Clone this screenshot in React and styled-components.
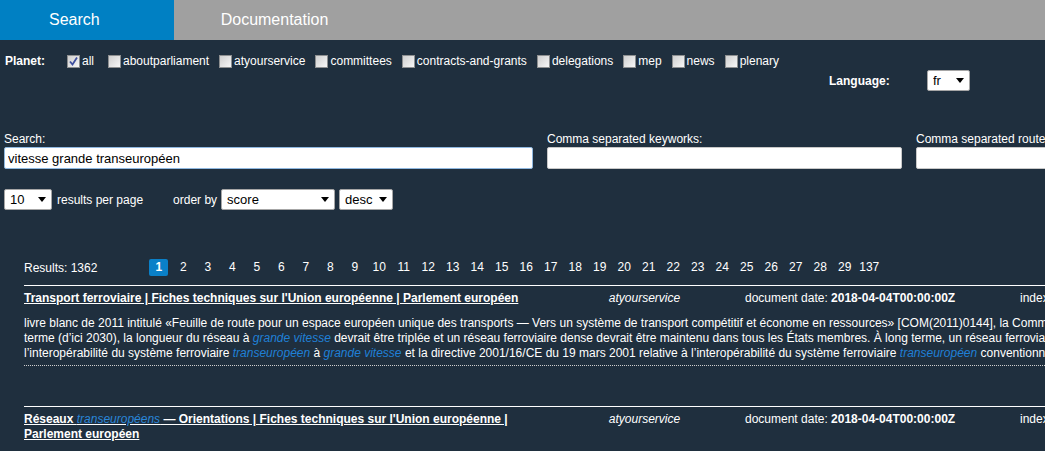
import React from 'react';
import styled, { createGlobalStyle } from 'styled-components';

const GlobalStyle = createGlobalStyle`
  html, body {
    margin: 0;
    padding: 0;
    background: #1f2f3e;
    overflow: hidden;
  }
  body {
    font-family: "Liberation Sans", Arial, sans-serif;
    font-size: 12px;
    color: #fff;
  }
`

const planets = ['all', 'aboutparliament', 'atyourservice', 'committees', 'contracts-and-grants', 'delegations', 'mep', 'news', 'plenary']
const pages = [...Array.from({ length: 29 }, (_, i) => i + 1), 137]

function Select({ width, value, options }) {
  return (
    <SelectWrap $w={width}>
      <NativeSelect defaultValue={value}>
        {options.map(o => <option key={o}>{o}</option>)}
      </NativeSelect>
      <Caret />
    </SelectWrap>
  )
}

function Check({ checked, label }) {
  return (
    <CheckItem $extra={checked}>
      <Box>
        {checked && (
          <svg width="11" height="11" viewBox="0 0 11 11">
            <path d="M2 5.5 L4.5 8.5 L9 1.5" fill="none" stroke="#3e4f9e" strokeWidth="1.8" />
          </svg>
        )}
      </Box>
      {label}
    </CheckItem>
  )
}

function App() {
  return (
    <>
      <GlobalStyle />
      <TabBar>
        <Tab $active>Search</Tab>
        <Tab>Documentation</Tab>
      </TabBar>
      <Main>
        <PlanetRow>
          <Strong>Planet:</Strong>
          <CheckList>
            {planets.map(p => <Check key={p} label={p} checked={p === 'all'} />)}
          </CheckList>
        </PlanetRow>

        <LanguageRow>
          <LangLabel>Language:</LangLabel>
          <Select width={43} value="fr" options={['fr', 'en', 'de']} />
        </LanguageRow>

        <FieldsRow>
          <Field>
            <FieldLabel>Search:</FieldLabel>
            <TextInput $w={529} $focus defaultValue="vitesse grande transeuropéen" />
          </Field>
          <Field>
            <FieldLabel>Comma separated keyworks:</FieldLabel>
            <TextInput $w={355} />
          </Field>
          <Field>
            <FieldLabel>Comma separated routes:</FieldLabel>
            <TextInput $w={355} />
          </Field>
        </FieldsRow>

        <OptionsRow>
          <Select width={48} value="10" options={['10', '20', '50']} />
          <Text $ml={5}>results per page</Text>
          <Text $ml={30}>order by</Text>
          <Spacer />
          <Select width={114} value="score" options={['score', 'date']} />
          <Spacer />
          <Select width={54} value="desc" options={['desc', 'asc']} />
        </OptionsRow>

        <Results>
          <ResultsHeader>
            <Count>Results: 1362</Count>
            <Pager>
              {pages.map(n => (
                <PageCell key={n}>
                  <PageLink $active={n === 1}>{n}</PageLink>
                </PageCell>
              ))}
            </Pager>
          </ResultsHeader>

          <Item>
            <ItemHead>
              <Title>Transport ferroviaire | Fiches techniques sur l'Union européenne | Parlement européen</Title>
              <PlanetName>atyourservice</PlanetName>
              <Meta>document date: <b>2018-04-04T00:00:00Z</b></Meta>
              <Meta>index: <b>fr</b></Meta>
            </ItemHead>
            <Snippet>
              <Line>livre blanc de 2011 intitulé «Feuille de route pour un espace européen unique des transports — Vers un système de transport compétitif et économe en ressources» [COM(2011)0144], la Commission a fixé des objectifs : à moyen</Line>
              <Line>terme (d’ici 2030), la longueur du réseau à <Hl>grande vitesse</Hl> devrait être triplée et un réseau ferroviaire dense devrait être maintenu dans tous les États membres. À long terme, un réseau ferroviaire</Line>
              <Line>l’interopérabilité du système ferroviaire <Hl>transeuropéen</Hl> à <Hl>grande vitesse</Hl> et la directive 2001/16/CE du 19 mars 2001 relative à l’interopérabilité du système ferroviaire <Hl>transeuropéen</Hl> conventionnel</Line>
            </Snippet>
          </Item>

          <Item $gap={40}>
            <ItemHead>
              <Title>Réseaux <TitleHl>transeuropéens</TitleHl> — Orientations | Fiches techniques sur l'Union européenne | Parlement européen</Title>
              <PlanetName>atyourservice</PlanetName>
              <Meta>document date: <b>2018-04-04T00:00:00Z</b></Meta>
              <Meta>index: <b>fr</b></Meta>
            </ItemHead>
          </Item>
        </Results>
      </Main>
    </>
  )
}

export default App;

const TabBar = styled.div`
display: flex;
height: 40px;
background: #a0a0a0;
`
const Tab = styled.div`
box-sizing: border-box;
width: ${p => p.$active ? 174 : 201}px;
padding-left: ${p => p.$active ? 49 : 0}px;
line-height: 40px;
text-align: ${p => p.$active ? 'left' : 'center'};
font-size: 16px;
color: #fff;
background: ${p => p.$active ? '#0080c3' : '#a0a0a0'};
`
const Main = styled.div`
overflow: hidden;
`
const PlanetRow = styled.div`
display: flex;
align-items: center;
height: 16px;
padding: 13px 0 0 5px;
`
const Strong = styled.span`
font-weight: bold;
width: 62px;
`
const CheckList = styled.div`
display: flex;
align-items: center;
gap: 10px;
`
const CheckItem = styled.label`
display: flex;
align-items: center;
gap: 2px;
margin-right: ${p => p.$extra ? 4 : 0}px;
`
const Box = styled.span`
width: 13px;
height: 13px;
box-sizing: border-box;
border: 1px solid #8d8f90;
background: linear-gradient(135deg, #cfcfcf, #f7f7f7);
display: inline-flex;
align-items: center;
justify-content: center;
`
const LanguageRow = styled.div`
display: flex;
justify-content: flex-end;
align-items: center;
margin-top: 1px;
padding-right: 75px;
`
const LangLabel = styled.span`
font-weight: bold;
width: 98px;
`
const SelectWrap = styled.div`
position: relative;
width: ${p => p.$w}px;
height: 21px;
`
const NativeSelect = styled.select`
appearance: none;
width: 100%;
height: 100%;
box-sizing: border-box;
border: 1px solid #a6a6a6;
border-radius: 2px;
background: #fff;
color: #000;
font: 13px "Liberation Sans", Arial, sans-serif;
padding: 0 0 0 5px;
outline: none;
`
const Caret = styled.span`
position: absolute;
right: 6px;
top: 8px;
border-left: 4px solid transparent;
border-right: 4px solid transparent;
border-top: 5px solid #000;
pointer-events: none;
`
const FieldsRow = styled.div`
display: flex;
gap: 14px;
margin-top: 41px;
padding-left: 4px;
`
const Field = styled.div`
display: flex;
flex-direction: column;
flex-shrink: 0;
`
const FieldLabel = styled.label`
line-height: 14px;
margin-bottom: 1px;
`
const TextInput = styled.input`
width: ${p => p.$w}px;
height: 22px;
box-sizing: border-box;
border: 1px solid ${p => p.$focus ? '#8fb8e0' : '#c8c8c8'};
border-radius: 2px;
padding: 0 3px;
font: 13px "Liberation Sans", Arial, sans-serif;
color: #000;
background: #fff;
outline: none;
`
const OptionsRow = styled.div`
display: flex;
align-items: center;
margin-top: 20px;
padding-left: 4px;
height: 21px;
`
const Text = styled.span`
margin-left: ${p => p.$ml || 0}px;
`
const Spacer = styled.span`
width: 4px;
`
const Results = styled.div`
margin-top: 49px;
padding-left: 24px;
`
const ResultsHeader = styled.div`
display: flex;
align-items: center;
height: 17px;
`
const Count = styled.span`
width: 122.5px;
`
const Pager = styled.div`
display: flex;
`
const PageCell = styled.div`
width: 24.5px;
display: flex;
justify-content: center;
`
const PageLink = styled.span`
display: inline-block;
min-width: 19px;
height: 17px;
line-height: 17px;
text-align: center;
border-radius: 2px;
color: #fff;
font-weight: ${p => p.$active ? 'bold' : 'normal'};
background: ${p => p.$active ? '#0a80c8' : 'transparent'};
`
const Item = styled.div`
margin-top: ${p => p.$gap || 9}px;
border-top: 1px solid #fff;
padding-top: 5px;
`
const ItemHead = styled.div`
display: grid;
grid-template-columns: 520px 201px 275px 200px;
align-items: start;
line-height: 15px;
`
const Title = styled.a`
font-weight: bold;
color: #fff;
text-decoration: underline;
`
const TitleHl = styled.i`
font-weight: normal;
color: #2a86d8;
`
const PlanetName = styled.i`
text-align: center;
`
const Meta = styled.span`
white-space: nowrap;
`
const Snippet = styled.div`
margin-top: 10px;
line-height: 15px;
padding-bottom: 4px;
border-bottom: 1px dotted #cfcfcf;
`
const Line = styled.div`
white-space: nowrap;
`
const Hl = styled.i`
color: #1f80d6;
`
